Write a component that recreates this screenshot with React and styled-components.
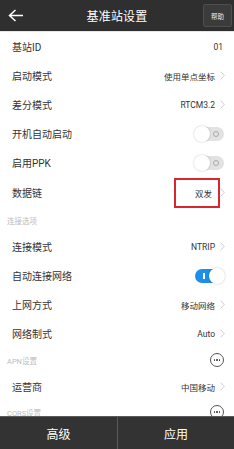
import React from 'react';
import styled, { createGlobalStyle } from 'styled-components';

const Global = createGlobalStyle`
  html, body { margin: 0; padding: 0; background: #fff; }
  body { font-family: Roboto, "Noto Sans CJK SC", sans-serif; }
`;

const Page = styled.div`
  width: 234px;
  height: 449px;
  display: flex;
  flex-direction: column;
  overflow: hidden;
  background: #fff;
`;

const Header = styled.div`
  height: 31px;
  flex: none;
  background: #2f2f2f;
  border-bottom: 1px solid #e6e6e6;
  display: grid;
  grid-template-columns: 40px 1fr 40px;
  align-items: center;
`;

const Back = styled.div`
  display: flex;
  align-items: center;
  padding-left: 8px;
`;

const Title = styled.div`
  text-align: center;
  color: #fff;
  font-size: 12px;
  letter-spacing: 0.2px;
`;

const Help = styled.div`
  justify-self: end;
  margin-right: 2px;
  width: 29px;
  height: 23px;
  box-sizing: border-box;
  background: #3b3b3b;
  border: 1px solid #4e4e4e;
  border-radius: 2px;
  color: #eee;
  font-size: 6.5px;
  display: flex;
  align-items: center;
  justify-content: center;
`;

const List = styled.div`
  flex: 1;
  overflow: hidden;
`;

const Row = styled.div`
  height: ${({ h }) => h || '29px'};
  display: flex;
  align-items: center;
  justify-content: space-between;
  padding: 0 9px 0 12px;
  color: #333;
`;

const Label = styled.span`
  font-size: 10px;
`;

const Section = styled.div`
  height: ${({ h }) => h || '24px'};
  display: flex;
  align-items: center;
  justify-content: space-between;
  padding: 0 10px 0 7px;
  color: #bdbdbd;
  font-size: 7.5px;
`;

const Value = styled.div`
  display: flex;
  align-items: center;
  gap: 5px;
  font-size: 8.5px;
  color: #333;
`;

const Boxed = styled.span`
  box-sizing: border-box;
  width: 46px;
  height: 30px;
  border: 2px solid #d7282e;
  display: flex;
  align-items: center;
  justify-content: flex-end;
  padding-right: 6px;
  margin-right: -5px;
`;

const Track = styled.div`
  position: relative;
  width: 29px;
  height: 14px;
  border-radius: 7px;
  background: ${({ on }) => (on ? '#1d8fe6' : '#e2e2e2')};
  margin-right: 1px;
`;

const Knob = styled.div`
  position: absolute;
  top: -1px;
  ${({ on }) => (on ? 'right: -1px;' : 'left: -1px;')}
  width: 16px;
  height: 16px;
  border-radius: 50%;
  background: #fff;
  box-shadow: 0 0 2px rgba(0, 0, 0, 0.25);
`;

const Mark = styled.div`
  position: absolute;
  top: 4px;
  ${({ on }) =>
    on
      ? 'left: 8px; width: 1.5px; height: 6px; background: #fff;'
      : 'right: 5px; width: 4px; height: 4px; border: 1px solid #aaa; border-radius: 50%;'}
`;

const More = styled.div`
  width: 14px;
  height: 14px;
  box-sizing: border-box;
  border: 1px solid #555;
  border-radius: 50%;
  display: flex;
  align-items: center;
  justify-content: center;
  gap: 1px;
  span {
    width: 1.6px;
    height: 1.6px;
    border-radius: 50%;
    background: #444;
  }
`;

const Bottom = styled.div`
  height: 32px;
  flex: none;
  background: #333;
  border-top: 1px solid #5a5a5a;
  display: grid;
  grid-template-columns: 1fr 1fr;
`;

const BarButton = styled.div`
  display: flex;
  align-items: center;
  justify-content: center;
  color: #fff;
  font-size: 12px;
  & + & { border-left: 1px solid #5a5a5a; }
`;

const Chevron = () => (
  <svg width="5" height="9" viewBox="0 0 5 9">
    <path d="M0.6 0.6 L4.2 4.5 L0.6 8.4" fill="none" stroke="#c8c8c8" strokeWidth="0.9" />
  </svg>
);

const Toggle = ({ on }) => (
  <Track on={on}>
    <Mark on={on} />
    <Knob on={on} />
  </Track>
);

const Dots = () => (
  <More>
    <span />
    <span />
    <span />
  </More>
);

const Nav = ({ label, value }) => (
  <Row>
    <Label>{label}</Label>
    <Value>
      {value}
      <Chevron />
    </Value>
  </Row>
);

export default function App() {
  return (
    <Page>
      <Global />
      <Header>
        <Back>
          <svg width="16" height="13" viewBox="0 0 16 13">
            <path d="M15 6.5 H2 M7.5 1 L1.5 6.5 L7.5 12" fill="none" stroke="#fff" strokeWidth="1.5" />
          </svg>
        </Back>
        <Title>基准站设置</Title>
        <Help>帮助</Help>
      </Header>
      <List>
        <Row>
          <Label>基站ID</Label>
          <Value style={{ marginRight: 2 }}>01</Value>
        </Row>
        <Nav label="启动模式" value="使用单点坐标" />
        <Nav label="差分模式" value="RTCM3.2" />
        <Row>
          <Label>开机自动启动</Label>
          <Toggle />
        </Row>
        <Row>
          <Label>启用PPK</Label>
          <Toggle />
        </Row>
        <Row h="31px">
          <Label>数据链</Label>
          <Value>
            <Boxed>双发</Boxed>
            <Chevron />
          </Value>
        </Row>
        <Section>连接选项</Section>
        <Nav label="连接模式" value="NTRIP" />
        <Row>
          <Label>自动连接网络</Label>
          <Toggle on />
        </Row>
        <Nav label="上网方式" value="移动网络" />
        <Nav label="网络制式" value="Auto" />
        <Section h="24px">
          APN设置
          <Dots />
        </Section>
        <Nav label="运营商" value="中国移动" />
        <Section h="22px">
          CORS设置
          <Dots />
        </Section>
      </List>
      <Bottom>
        <BarButton>高级</BarButton>
        <BarButton>应用</BarButton>
      </Bottom>
    </Page>
  );
}
